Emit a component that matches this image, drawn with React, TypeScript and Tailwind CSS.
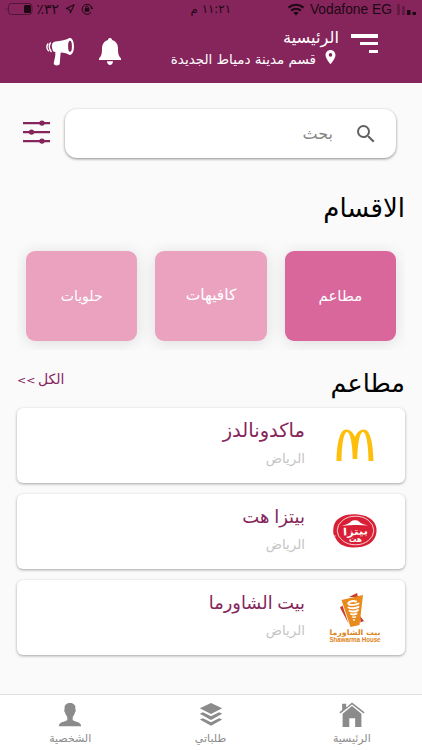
import { Navigation } from 'lucide-react';
import { MdLocationOn, MdSearch } from 'react-icons/md';

interface Restaurant {
  name: string;
  city: string;
  nameClass: string;
  logo: () => React.JSX.Element;
}

const StatusBar = () => (
  <div className="flex h-[18px] items-center text-[#1d0814]">
    <div className="flex flex-1 items-center justify-end pr-[6px]" dir="ltr">
      <svg className="mr-[5px] h-[13px] w-[18px]" viewBox="0 0 18 13" fill="none" stroke="currentColor" strokeWidth="2.2">
        <path d="M1.5 4.6C5.8.8 12.2.8 16.5 4.6M4.2 7.6c2.8-2.4 6.8-2.4 9.6 0" />
        <path d="M6.3 9.7c1.6-1.3 3.8-1.3 5.4 0L9 12.4z" fill="currentColor" stroke="none" />
      </svg>
      <span className="pt-0.5 font-['Liberation_Sans'] text-[13.8px] leading-[18px] whitespace-nowrap">Vodafone EG</span>
      <svg className="ml-[5px] h-3 w-[19px]" viewBox="0 0 19 12" fill="currentColor">
        <path d="M0 1h3v11H0zM5 3h3v9H5z" opacity=".3" />
        <path d="M10 7h3.500v5H10zM15.500 9H19v3h-3.500z" />
      </svg>
    </div>
    <span className="w-10 text-[11.8px] leading-[18px] whitespace-nowrap">١١:٢١ م</span>
    <div className="flex flex-1 items-center pl-[6px]" dir="ltr">
      <svg className="h-3 w-[27px]" viewBox="0 0 27 12">
        <path d="M1.2 4.2v4C.2 7.5.2 5 1.2 4.2z" fill="currentColor" opacity=".5" />
        <rect x="2.5" y=".5" width="23.5" height="11" rx="3" fill="none" stroke="currentColor" opacity=".5" />
        <rect x="18" y="2" width="7" height="8" rx="1.5" fill="currentColor" />
      </svg>
      <span className="ml-[2px] w-6 text-[14px] leading-[18px] whitespace-nowrap" dir="rtl">٣٢٪</span>
      <Navigation className="ml-[6px] size-[10px]" strokeWidth={2.5} />
      <svg className="ml-[6px] size-3" viewBox="0 0 12 12" fill="none" stroke="currentColor">
        <path d="M10 9.5A5 5 0 1 1 11 5M9.5 4.5 11 6l1-1.5" />
        <rect x="3.7" y="5.2" width="4.6" height="3.5" fill="currentColor" stroke="none" />
        <path d="M4.8 5.5V4.2a1.2 1.2 0 0 1 2.4 0v1.3" />
      </svg>
    </div>
  </div>
);

const Header = () => (
  <header className="h-[83px] shrink-0 bg-[#86255b] text-white">
    <StatusBar />
    <div className="flex justify-between pr-[44px] pl-[46px]">
      <div className="flex">
        <svg className="mt-4 h-[19px] w-[27px]" viewBox="0 0 27 19" fill="currentColor">
          <path d="M0 0h27v4H0zM9 8h18v3H9zM18 16h9v3h-9z" />
        </svg>
        <div className="pr-3">
          <h1 className="h-[28px] text-[16.3px] leading-[39px] whitespace-nowrap">الرئيسية</h1>
          <div className="flex">
            <MdLocationOn className="mt-0.5 h-[18px] w-[17px]" />
            <span className="pr-[6px] text-[13.5px] leading-[26px] whitespace-nowrap">قسم مدينة دمياط الجديدة</span>
          </div>
        </div>
      </div>
      <div className="flex gap-[25px]">
        <svg className="mt-5 h-[28px] w-[22px]" viewBox="0 0 22 28" fill="currentColor">
          <path d="M11 0c1.2 0 2 .8 2 2 4 1 6 4.500 6 8.500 0 6 .8 7.500 3 10V22H0v-1.500c2.200-2.500 3-4 3-10C3 6.500 5 3 9 2c0-1.200.8-2 2-2zM8 23.300h6c0 2-1.200 3.700-3 3.700s-3-1.700-3-3.700z" />
        </svg>
        <svg className="mt-[20px] h-[28px] w-[28px]" viewBox="0 0 28 28" fill="currentColor">
          <path d="M24 0C20 2 15 3 9.500 3.500 6.500 4 5.500 6.500 6 9.500S7.300 14 9.300 14c.5 4-.8 7-1.600 11.500 0 2.500 5.800 2.500 6 .5.300-4 .500-7 1-11.500 3.500 0 6.500 1 9.300 2.500z" />
          <ellipse cx="24" cy="8.500" rx="4" ry="8.500" />
          <ellipse cx="24" cy="8.300" rx="1.900" ry="5.500" fill="#86255b" />
          <path d="M4.700 4.500C2.700 7 2.700 11 5.500 14M2.200 5.500C.3 8 .3 10.500 2.700 13.300" fill="none" stroke="currentColor" strokeWidth="1.400" />
        </svg>
      </div>
    </div>
  </header>
);

const SearchRow = () => (
  <div className="flex items-center justify-between pt-[26px] pr-[26px] pl-[22px]">
    <div className="flex h-[49px] w-[331px] items-center rounded-xl bg-white pr-[18px] shadow-[0_1px_3px_rgba(0,0,0,0.45)]">
      <MdSearch className="size-6 text-[#616161]" />
      <span className="pr-[21px] text-[16px] leading-[49px] text-[#858585]">بحث</span>
    </div>
    <svg className="mb-1 h-6 w-[29px]" viewBox="0 0 29 24" fill="#86255b">
      <path d="M1 2h27v2.2H1zM1 11h27v2.2H1zM1 20h27v2.2H1z" />
      <circle cx="20" cy="3.1" r="2.7" />
      <circle cx="9.5" cy="12.1" r="2.7" />
      <circle cx="20" cy="21.1" r="2.7" />
    </svg>
  </div>
);

const McLogo = () => (
  <svg className="h-[60px] w-[60px]" viewBox="0 0 60 60" fill="#fdbf0c">
    <path d="M11.500 46C12 27 15 14.500 21 14.500c4 0 7.300 3 9 7.500 1.700-4.500 5-7.500 9-7.500 6 0 9 12.500 9.500 31.500h-5C43.300 28 41 17 38 17c-3 0-5.500 11-5.700 27h-4.600C27.500 28 25 17 22 17c-3 0-5.300 11-5.500 29z" />
  </svg>
);

const PizzaLogo = () => (
  <svg className="h-[60px] w-[60px]" viewBox="0 0 60 60">
    <path d="M9 24C12 15 23 12.5 33 13.5c12 1 19.5 8 18.500 17.500-1 11-11 15.500-23 15.500-10 0-16-4.500-18-9.500-3-3-2.500-9-1.500-13z" fill="#d91f35" />
    <ellipse cx="30.5" cy="29.5" rx="18.3" ry="14.3" fill="none" stroke="#fff" strokeWidth=".8" />
    <path d="M8 35h2.500" stroke="#fff" strokeWidth="1" />
    <path d="M17 25c3-1.500 7-2 9-4.500 1.500-1.500 6-2 8 0 2 2.500 5 3 9 4-8-1-18-.5-26 .5z" fill="#fff" />
    <g fill="#fff" fontFamily="DejaVu Sans" fontWeight="700" direction="rtl">
      <text x="43" y="34" fontSize="10" textLength="25" lengthAdjust="spacingAndGlyphs" transform="rotate(-3 30 31)">بيتزا</text>
      <text x="37" y="41" fontSize="8" textLength="13" lengthAdjust="spacingAndGlyphs">هت</text>
    </g>
  </svg>
);

const ShawarmaLogo = () => (
  <svg className="h-[60px] w-[60px]" viewBox="0 0 60 60">
    <path d="M15 20.500l2.500-2 6 18zM24 10l8-4 1 4zM35 29l4 5-3.500 1.500z" fill="#c93b2c" />
    <path d="M16.500 13 38 8l-3.500 30-9 2z" fill="#e88a1c" />
    <g fill="none" stroke="#fff" strokeLinecap="round">
      <path d="M31 14.500c-4-1.500-9 1-7.500 2.500s8 1 10-.5M23.500 20.500c2 1.200 8 1 10-.7M24.500 23.800c2 1.200 7 .8 8.500-.8M26 27c1.500.7 4 .5 5.500-.4" strokeWidth="1.900" />
      <path d="M27.500 30c1 .4 2 .3 3-.2M28.500 33h1" strokeWidth="1.300" />
    </g>
    <g fill="#dc8420" fontWeight="700">
      <text x="55.5" y="48" fontFamily="DejaVu Sans" fontSize="7.5" textLength="51" lengthAdjust="spacingAndGlyphs" direction="rtl">بيت الشاورما</text>
      <text x="4.5" y="55" fontFamily="Liberation Sans" fontSize="6.6" textLength="51" lengthAdjust="spacingAndGlyphs" direction="ltr">Shawarma House</text>
    </g>
  </svg>
);

const categories = [
  { label: 'مطاعم', className: 'bg-[#d9679b] text-[15px]' },
  { label: 'كافيهات', className: 'bg-[#eaa2bf] text-[15.5px]' },
  { label: 'حلويات', className: 'bg-[#eaa2bf] text-[14px]' },
];

const restaurants: Restaurant[] = [
  { name: 'ماكدونالدز', city: 'الرياض', nameClass: 'text-[19.5px]', logo: McLogo },
  { name: 'بيتزا هت', city: 'الرياض', nameClass: 'text-[18px] [word-spacing:-1px]', logo: PizzaLogo },
  { name: 'بيت الشاورما', city: 'الرياض', nameClass: 'text-[17.8px] [word-spacing:-1px]', logo: ShawarmaLogo },
];

const RestaurantCard = ({ restaurant }: { restaurant: Restaurant }) => {
  const Logo = restaurant.logo;
  return (
    <div className="flex h-[75px] rounded-md bg-white pr-5 shadow-[0_1px_3px_rgba(0,0,0,0.35)]">
      <div className="pt-[7px]">
        <Logo />
      </div>
      <div className="pr-5">
        <h3 className={`h-[37px] leading-[46px] whitespace-nowrap text-[#86255b] ${restaurant.nameClass}`}>{restaurant.name}</h3>
        <p className="text-[13.4px] leading-[28px] text-[#c5c5c5]">{restaurant.city}</p>
      </div>
    </div>
  );
};

const BottomNav = () => (
  <nav className="flex h-[56px] shrink-0 border-t border-[#dedede] bg-white text-[#8b8b8b]">
    <div className="flex flex-1 flex-col items-center pt-[7px] pl-px">
      <svg className="h-[29px] w-7" viewBox="0 0 28 29" fill="currentColor">
        <path d="M3 2h4.5v4L14 .5l14 11-1 1.300L14 2.800 1 12.800l-1-1.300 3-2.500z" />
        <path d="M3.500 13 14 4.500 24.500 13v15H17.500V18h-6.500v10H3.500z" />
      </svg>
      <span className="text-[11px] leading-[22px]">الرئيسية</span>
    </div>
    <div className="flex flex-1 flex-col items-center pt-[7px]">
      <svg className="h-[29px] w-7" viewBox="0 0 28 29" fill="currentColor">
        <path d="M14 1l12.5 6L14 13.500 1.500 7zM1.500 13l3.500-1.500 9 4.500 9-4.500 3.500 1.500L14 20zM1.500 19.500 5 18l9 4.500 9-4.500 3.500 1.500L14 26.500z" />
      </svg>
      <span className="text-[11px] leading-[22px]">طلباتي</span>
    </div>
    <div className="flex flex-1 flex-col items-center pt-[7px]">
      <svg className="h-[29px] w-7" viewBox="0 0 28 29" fill="currentColor">
        <path d="M14 1c4.500 0 6.500 2.500 6 7 .8 1 .3 3-.6 4-.4 2.500-2 3.500-2.400 5v3c1 2 9.500 1.500 9.500 7h-25c0-5.500 8.500-5 9.500-7v-3c-.4-1.500-2-2.500-2.400-5-.9-1-1.400-3-.6-4-.5-4.500 1.500-7 6-7z" />
      </svg>
      <span className="text-[11px] leading-[22px]">الشخصية</span>
    </div>
  </nav>
);

const App = () => {
  return (
    <div dir="rtl" className="flex h-[750px] w-[422px] flex-col overflow-hidden bg-[#fafafb] font-['DejaVu_Sans',sans-serif]">
      <Header />
      <main className="flex-1">
        <SearchRow />
        <h2 className="h-[84px] pt-[29px] pr-[17px] text-[26px] leading-[43px] text-black">الاقسام</h2>
        <div className="mx-[17px] flex h-[108px] gap-[18px] overflow-hidden px-[9px] pt-[9px]">
          {categories.map((category) => (
            <div
              key={category.label}
              className={`flex h-[90px] flex-1 items-center justify-center rounded-[9px] text-white shadow-[0_2px_16px_rgba(0,0,0,0.12)] ${category.className}`}
            >
              {category.label}
            </div>
          ))}
        </div>
        <div className="flex h-[58px] justify-between px-[17px]">
          <h2 className="pt-[11px] text-[25.5px] leading-[45px] text-black">مطاعم</h2>
          <a className="pt-[17px] text-[14px] leading-[24px] [word-spacing:-2px] text-[#86255b]">
            الكل <span className="text-[11px]">&gt;&gt;</span>
          </a>
        </div>
        <div className="flex flex-col gap-[11px] px-[17px]">
          {restaurants.map((restaurant) => (
            <RestaurantCard key={restaurant.name} restaurant={restaurant} />
          ))}
        </div>
      </main>
      <BottomNav />
    </div>
  );
};

export default App;
